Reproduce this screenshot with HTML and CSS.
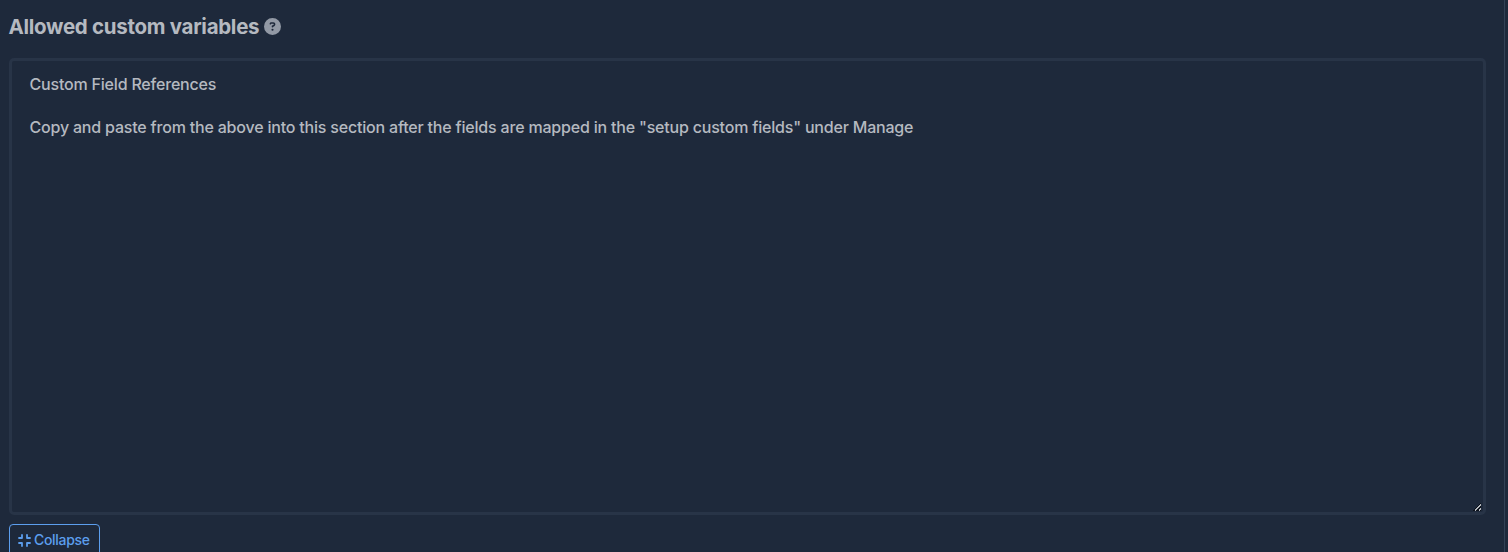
FILE: index.html
```html
<!DOCTYPE html>
<html lang="en">
<head>
<meta charset="utf-8">
<title>Allowed custom variables</title>
<link rel="stylesheet" href="styles.css">
</head>
<body>
<main class="panel">
  <h2 class="title">Allowed custom variables
    <svg class="help" viewBox="0 0 512 512"><path fill-rule="evenodd" d="M256 0a256 256 0 1 1 0 512a256 256 0 1 1 0-512zM170 165c8-22 29-37 52-37h58c35 0 63 28 63 63 0 23-12 44-32 55l-31 18c0 13-11 24-24 24s-24-11-24-24v-14c0-9 5-17 12-21l44-25c5-3 8-8 8-13 0-9-7-15-16-15h-58c-3 0-6 2-7 5l-1 1c-4 13-18 19-30 15s-19-18-15-31zM256 320a32 32 0 1 1 0 64a32 32 0 1 1 0-64z"/></svg>
  </h2>
  <div class="field">
    <textarea class="editor" spellcheck="false">Custom Field References

Copy and paste from the above into this section after the fields are mapped in the "setup custom fields" under Manage</textarea>
    <svg class="grip" viewBox="0 0 8 9" shape-rendering="crispEdges"><path fill="#0c111b" d="M0 8h1V7h1V6h1V5h1V4h1V3h1V2h1V1h1v8H0z"/><path fill="#b4b8be" d="M2 8h1v1H2zM2 7h2v1H2zM3 6h2v1H3zM4 5h2v1H4zM5 4h2v1H5zM6 3h2v1H6zM7 2h1v1H7zM6 8h1v1H6zM6 7h2v1H6zM7 6h1v1H7z"/></svg>
  </div>
  <button class="collapse" type="button">
    <svg class="icon" viewBox="0 0 13 13"><path d="M1 4H4V1M9 1V4H12M1 9H4V12M9 12V9H12"/></svg>
    Collapse
  </button>
</main>
</body>
</html>
```
FILE: styles.css
```css
* { box-sizing: border-box; }
body { margin: 0; height: 552px; overflow: hidden; background: #1e293b; color: #b5b9c0; font-family: Inter, sans-serif; }
.panel { width: 1505px; height: 552px; padding: 12px 19px 0 8.5px; border-right: 1px solid #334155; display: flex; flex-direction: column; align-items: flex-start; }
.title { margin: 0; height: 30px; display: flex; align-items: center; gap: 5px; font-size: 20.5px; line-height: 30px; font-weight: 700; letter-spacing: -0.29px; }
.help { width: 17px; height: 17px; margin-top: -1px; fill: #9299a5; }
.field { position: relative; flex: none; margin: 16px 0 9px .5px; }
.editor { display: block; width: 1477px; height: 457px; padding: 13px 17.5px; border: 3px solid #283447; border-radius: 5px; background: #1e293b; color: inherit; font: 500 16px/21.5px Inter, sans-serif; letter-spacing: -0.195px; outline: 0; resize: none; }
.grip { position: absolute; right: 5px; bottom: 4px; width: 8px; height: 9px; pointer-events: none; }
.collapse { width: 91px; height: 32px; flex: none; margin-left: .5px; padding: 0 8px; display: flex; align-items: center; gap: 3px; border: 1px solid #5c9eee; border-radius: 4px; background: none; color: #5c9eee; font: 550 14px/20px Inter, sans-serif; letter-spacing: -0.32px; white-space: nowrap; }
.icon { flex: none; width: 13px; height: 13px; fill: none; stroke: currentColor; stroke-width: 1.8; stroke-linecap: round; stroke-linejoin: round; }
```
